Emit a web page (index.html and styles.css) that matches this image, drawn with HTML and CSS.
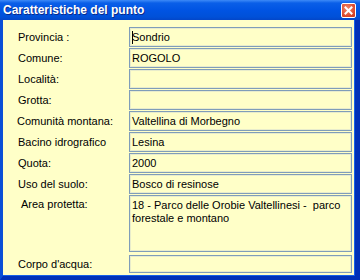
FILE: index.html
```html
<!DOCTYPE html>
<html>
<head>
<meta charset="utf-8">
<link rel="stylesheet" href="styles.css">
</head>
<body>
<div class="window">
  <div class="titlebar">
    <span class="title">Caratteristiche del punto</span>
    <span class="close">
      <svg width="13" height="13" viewBox="0 0 13 13"><path d="M3.5 3.5 L9.5 9.5 M9.5 3.5 L3.5 9.5" stroke="#fff" stroke-width="2" stroke-linecap="square"/></svg>
    </span>
  </div>
  <div class="body">
    <div class="form">
      <div class="label">Provincia :</div><div class="field"><span class="caret"></span>Sondrio</div>
      <div class="label">Comune:</div><div class="field">ROGOLO</div>
      <div class="label">Località:</div><div class="field"></div>
      <div class="label">Grotta:</div><div class="field"></div>
      <div class="label shift-l">Comunità montana:</div><div class="field">Valtellina di Morbegno</div>
      <div class="label">Bacino idrografico</div><div class="field">Lesina</div>
      <div class="label">Quota:</div><div class="field">2000</div>
      <div class="label">Uso del suolo:</div><div class="field">Bosco di resinose</div>
      <div class="label top shift-r">Area protetta:</div><div class="field area">18 - Parco delle Orobie Valtellinesi -&nbsp; parco forestale e montano</div>
      <div class="label last">Corpo d'acqua:</div><div class="field last">&nbsp;</div>
    </div>
  </div>
</div>
</body>
</html>
```
FILE: styles.css
```css
html, body {
  margin: 0;
  padding: 0;
  background: #fff;
}
.window {
  width: 360px;
  height: 280px;
  display: flex;
  flex-direction: column;
}
.titlebar {
  height: 20px;
  flex: none;
  display: flex;
  align-items: center;
  justify-content: space-between;
  padding: 0 4px 0 3px;
  background: linear-gradient(#3d8af7 0px, #0a5fe8 3px, #0054e3 10px, #0050d8 17px, #0346c8 20px);
}
.title {
  color: #fff;
  font-family: "Liberation Sans", Arial, sans-serif;
  font-weight: bold;
  font-size: 12px;
  text-shadow: 1px 1px 0 #0a2a8a;
}
.close {
  width: 13px;
  height: 13px;
  border: 1px solid #fff;
  border-radius: 2px;
  background: radial-gradient(circle at 40% 35%, #f2886a, #d9462a 70%, #c0391f);
  display: flex;
}
.close svg { display: block; }
.body {
  flex: 1;
  background: #ffffc8;
  border-left: 3px solid #0a4fd6;
  border-right: 5px solid #0031b8;
  border-bottom: 4px solid #0031b8;
  box-shadow: inset -1px -1px 0 #1660e8;
  padding: 7px 3px 0 0;
}
.form {
  display: grid;
  grid-template-columns: 126px 223px;
  grid-template-rows: repeat(8, 20px) 57px 20px;
  row-gap: 1px;
  font-family: "Liberation Sans", Arial, sans-serif;
  font-size: 11px;
  color: #000;
}
.label {
  display: flex;
  align-items: center;
  padding-left: 15px;
}
.label.shift-l { padding-left: 14px; }
.label.shift-r { padding-left: 18px; }
.label.top {
  align-items: flex-start;
  padding-top: 3px;
}
.last { margin-top: 2px; }
.field {
  box-sizing: border-box;
  border: 1px solid #7f9db9;
  box-shadow: inset 0 0 0 1px #e8eccc;
  padding: 0 2px;
  display: flex;
  align-items: center;
  white-space: nowrap;
}
.field.area {
  align-items: flex-start;
  white-space: normal;
  padding-top: 3px;
  line-height: 13px;
}
.caret {
  display: inline-block;
  width: 1px;
  height: 13px;
  background: #000;
  margin-right: -1px;
}
```
